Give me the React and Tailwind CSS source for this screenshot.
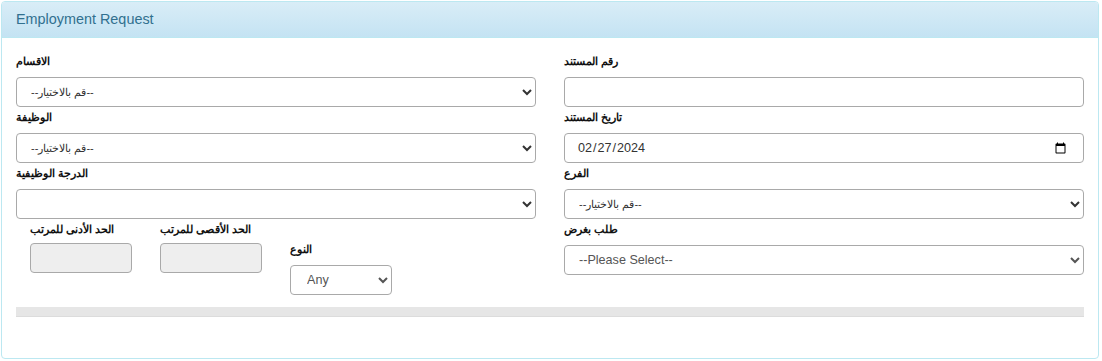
import React, { useState } from 'react';

// 라벨 공통 스타일
function FieldLabel({ children, className = '' }) {
  return (
    <label className={`block h-5 leading-5 text-[11px] font-bold text-[#111] ${className}`}>
      {children}
    </label>
  );
}

const boxBase = 'block h-[30px] border border-[#a9a9a9] rounded-[4px] outline-none';

function SelectField({ label, options, value, onChange, small }) {
  return (
    <div>
      <FieldLabel className="mb-[6px]">{label}</FieldLabel>
      <select
        value={value}
        onChange={onChange}
        className={`${boxBase} w-full bg-white pl-[10px] pr-2 ${small ? 'text-[11px] text-[#333]' : 'text-[12.6px] text-[#555]'}`}
      >
        {options.map((o) => (
          <option key={o} value={o}>{o}</option>
        ))}
      </select>
    </div>
  );
}

export default function App() {
  const [docNo, setDocNo] = useState('');
  const [docDate, setDocDate] = useState('2024-02-27');
  const [gender, setGender] = useState('Any');
  const [purpose, setPurpose] = useState('--Please Select--');
  const pick = '--قم بالاختيار--';

  return (
    <div className="font-['Liberation_Sans',Arial,sans-serif] bg-white w-[1102px] h-[361px] pt-px pl-px">
      <div className="w-[1098px] h-[358px] border border-[#bce8f1] rounded-[4px] bg-white overflow-hidden">
        {/* 헤더 */}
        <div className="h-[36px] px-[14px] flex items-center bg-gradient-to-b from-[#d9edf7] to-[#c4e3f3] border-b border-[#bce8f1]">
          <h3 className="text-[14.4px] text-[#31708f]">Employment Request</h3>
        </div>

        <div className="px-[14px] pt-[13px]">
          <div className="grid grid-cols-2 gap-x-[28px]">
            {/* 왼쪽 컬럼 */}
            <div>
              <SelectField label="الاقسام" options={[pick]} small />
              <SelectField label="الوظيفة" options={[pick]} small />
              <SelectField label="الدرجة الوظيفية" options={['']} small />

              <div className="flex gap-[28px] pl-[14px]">
                <div className="w-[102px]">
                  <FieldLabel className="mb-1">الحد الأدنى للمرتب</FieldLabel>
                  <input disabled className={`${boxBase} w-full bg-[#eee]`} />
                </div>
                <div className="w-[102px]">
                  <FieldLabel className="mb-1">الحد الأقصى للمرتب</FieldLabel>
                  <input disabled className={`${boxBase} w-full bg-[#eee]`} />
                </div>
                <div className="w-[102px] mt-5">
                  <FieldLabel className="mb-[6px]">النوع</FieldLabel>
                  <select
                    value={gender}
                    onChange={(e) => setGender(e.target.value)}
                    className={`${boxBase} w-full bg-white pl-[12px] pr-2 text-[12.6px] text-[#555]`}
                  >
                    <option>Any</option>
                    <option>Male</option>
                    <option>Female</option>
                  </select>
                </div>
              </div>
            </div>

            {/* 오른쪽 컬럼 */}
            <div>
              <div>
                <FieldLabel className="mb-[6px]">رقم المستند</FieldLabel>
                <input
                  value={docNo}
                  onChange={(e) => setDocNo(e.target.value)}
                  className={`${boxBase} w-full bg-white px-3 text-[12.6px] text-[#555]`}
                />
              </div>
              <div>
                <FieldLabel className="mb-[6px]">تاريخ المستند</FieldLabel>
                <input
                  type="date"
                  value={docDate}
                  onChange={(e) => setDocDate(e.target.value)}
                  className={`${boxBase} w-full bg-white pl-3 pr-[14px] text-[12.6px] text-[#333]`}
                />
              </div>
              <SelectField label="الفرع" options={[pick]} small />
              <SelectField
                label="طلب بغرض"
                options={['--Please Select--']}
                value={purpose}
                onChange={(e) => setPurpose(e.target.value)}
              />
            </div>
          </div>

          {/* 하단 회색 바 */}
          <div className="mt-[12px] h-[10px] bg-[#e6e6e6] border-b border-[#dcdcdc]" />
        </div>
      </div>
    </div>
  );
}
